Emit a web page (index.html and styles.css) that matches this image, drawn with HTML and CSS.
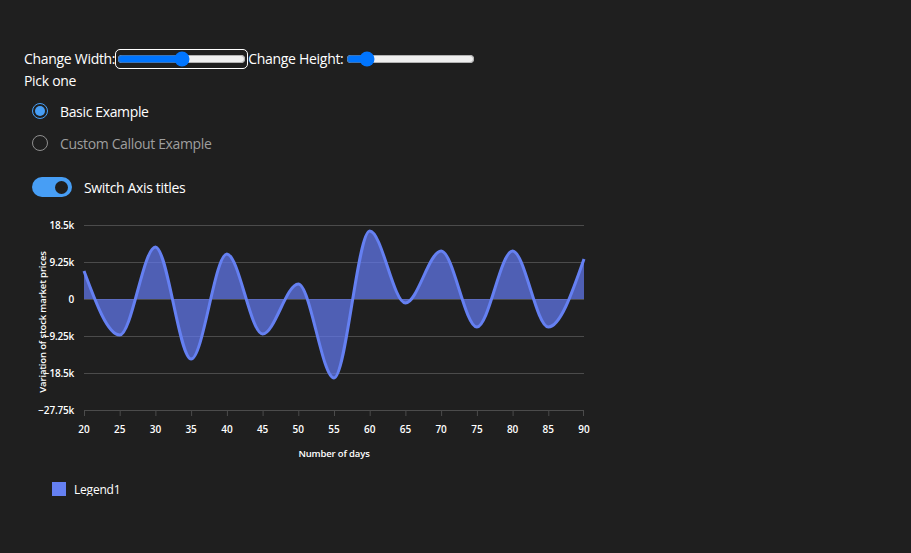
FILE: index.html
```html
<!DOCTYPE html>
<html lang="en">
<head>
<meta charset="utf-8">
<title>Area chart</title>
<link rel="stylesheet" href="styles.css">
</head>
<body>
<div class="page">
  <div class="controls">
    <label class="ctl-label" for="w">Change Width:</label>
    <input id="w" class="slider focused" type="range" min="0" max="100" value="50">
    <label class="ctl-label" for="h">Change Height:</label>
    <input id="h" class="slider" type="range" min="0" max="100" value="12">
  </div>
  <div class="pick">Pick one</div>
  <div class="radios">
    <div class="radio-row">
      <span class="radio checked"><span class="dot"></span></span>
      <span class="radio-label">Basic Example</span>
    </div>
    <div class="radio-row">
      <span class="radio"></span>
      <span class="radio-label muted">Custom Callout Example</span>
    </div>
  </div>
  <div class="switch-row">
    <span class="switch"><span class="knob"></span></span>
    <span class="switch-label">Switch Axis titles</span>
  </div>
  <svg class="chart" width="580" height="255" viewBox="24 210 580 255">
    <g class="grid">
      <line x1="84" y1="225.5" x2="584" y2="225.5"/>
      <line x1="84" y1="262.5" x2="584" y2="262.5"/>
      <line x1="84" y1="299.5" x2="584" y2="299.5"/>
      <line x1="84" y1="336.5" x2="584" y2="336.5"/>
      <line x1="84" y1="373.5" x2="584" y2="373.5"/>
      <line x1="84" y1="410.5" x2="584" y2="410.5"/>
    </g>
    <g class="ticks">
      <line x1="84.5" y1="410" x2="84.5" y2="416"/>
      <line x1="120.2" y1="410" x2="120.2" y2="416"/>
      <line x1="155.9" y1="410" x2="155.9" y2="416"/>
      <line x1="191.6" y1="410" x2="191.6" y2="416"/>
      <line x1="227.4" y1="410" x2="227.4" y2="416"/>
      <line x1="263.1" y1="410" x2="263.1" y2="416"/>
      <line x1="298.8" y1="410" x2="298.8" y2="416"/>
      <line x1="334.5" y1="410" x2="334.5" y2="416"/>
      <line x1="370.2" y1="410" x2="370.2" y2="416"/>
      <line x1="405.9" y1="410" x2="405.9" y2="416"/>
      <line x1="441.6" y1="410" x2="441.6" y2="416"/>
      <line x1="477.4" y1="410" x2="477.4" y2="416"/>
      <line x1="513.1" y1="410" x2="513.1" y2="416"/>
      <line x1="548.8" y1="410" x2="548.8" y2="416"/>
      <line x1="583.5" y1="410" x2="583.5" y2="416"/>
    </g>
    <path class="area" d="M84,271 C95.9,303 107.8,335 119.71,335 C131.62,335 143.52,247 155.43,247 C167.33,247 179.24,359 191.14,359 C203.05,359 214.95,254 226.86,254 C238.76,254 250.67,334 262.57,334 C274.48,334 286.38,284 298.29,284 C310.19,284 322.1,378 334,378 C345.9,378 357.81,231 369.71,231 C381.62,231 393.52,303 405.43,303 C417.33,303 429.24,251 441.14,251 C453.05,251 464.95,327 476.86,327 C488.76,327 500.67,251 512.57,251 C524.48,251 536.38,327 548.29,327 C560.19,327 572.1,293 584,259 L584,299 L84,299 Z"/>
    <path class="line" d="M84,271 C95.9,303 107.8,335 119.71,335 C131.62,335 143.52,247 155.43,247 C167.33,247 179.24,359 191.14,359 C203.05,359 214.95,254 226.86,254 C238.76,254 250.67,334 262.57,334 C274.48,334 286.38,284 298.29,284 C310.19,284 322.1,378 334,378 C345.9,378 357.81,231 369.71,231 C381.62,231 393.52,303 405.43,303 C417.33,303 429.24,251 441.14,251 C453.05,251 464.95,327 476.86,327 C488.76,327 500.67,251 512.57,251 C524.48,251 536.38,327 548.29,327 C560.19,327 572.1,293 584,259"/>
    <g class="ylabels">
      <text x="74" y="229">18.5k</text>
      <text x="74" y="266">9.25k</text>
      <text x="74" y="303">0</text>
      <text x="74" y="340">−9.25k</text>
      <text x="74" y="377">−18.5k</text>
      <text x="74" y="414">−27.75k</text>
    </g>
    <g class="xlabels">
      <text x="84" y="433">20</text>
      <text x="119.7" y="433">25</text>
      <text x="155.4" y="433">30</text>
      <text x="191.1" y="433">35</text>
      <text x="226.9" y="433">40</text>
      <text x="262.6" y="433">45</text>
      <text x="298.3" y="433">50</text>
      <text x="334" y="433">55</text>
      <text x="369.7" y="433">60</text>
      <text x="405.4" y="433">65</text>
      <text x="441.1" y="433">70</text>
      <text x="476.9" y="433">75</text>
      <text x="512.6" y="433">80</text>
      <text x="548.3" y="433">85</text>
      <text x="584" y="433">90</text>
    </g>
    <text class="axis-title" x="334" y="457">Number of days</text>
    <text class="axis-title" transform="translate(46 322) rotate(-90)">Variation of stock market prices</text>
  </svg>
  <div class="legend">
    <span class="swatch"></span>
    <span class="legend-label">Legend1</span>
  </div>
</div>
</body>
</html>
```

FILE: styles.css
```css
html, body {
  margin: 0;
  padding: 0;
  background: #1f1f1f;
}
body {
  font-family: "Segoe UI", "Open Sans", "Noto Sans", sans-serif;
  color: #ffffff;
  font-size: 14px;
}
.page {
  padding: 49px 24px 0 24px;
}
.controls {
  display: flex;
  align-items: center;
  height: 20px;
}
.ctl-label {
  font-size: 14px;
  line-height: 20px;
  letter-spacing: -0.3px;
}
.slider {
  width: 129px;
  height: 16px;
  margin: 0 2px;
  accent-color: #0075ff;
}
.slider.focused {
  outline: 1px solid #ffffff;
  outline-offset: 1px;
  border-radius: 3px;
}
.pick {
  margin-top: 2px;
  line-height: 20px;
  letter-spacing: -0.3px;
}
.radios {
  display: flex;
  flex-direction: column;
  margin-top: 4px;
}
.radio-row {
  display: flex;
  align-items: center;
  height: 32px;
  padding-left: 8px;
}
.radio {
  box-sizing: border-box;
  width: 16px;
  height: 16px;
  border: 1px solid #8f8f8f;
  border-radius: 50%;
  display: flex;
  align-items: center;
  justify-content: center;
}
.radio.checked {
  border-color: #479ef5;
}
.dot {
  width: 10px;
  height: 10px;
  border-radius: 50%;
  background: #479ef5;
}
.radio-label {
  margin-left: 12px;
  letter-spacing: -0.35px;
}
.radio-label.muted {
  color: #9e9e9e;
}
.switch-row {
  display: flex;
  align-items: center;
  margin-top: 18px;
  padding-left: 8px;
  height: 20px;
}
.switch {
  box-sizing: border-box;
  width: 40px;
  height: 20px;
  border-radius: 10px;
  background: #479ef5;
  display: flex;
  align-items: center;
  justify-content: flex-end;
  padding-right: 4px;
}
.knob {
  width: 13px;
  height: 13px;
  border-radius: 50%;
  background: #1f1f1f;
}
.switch-label {
  margin-left: 12px;
  letter-spacing: -0.35px;
}
.chart {
  display: block;
  margin-top: 13px;
  font-family: "Segoe UI", "Open Sans", "Noto Sans", sans-serif;
}
.grid line {
  stroke: #4b4b4b;
  stroke-width: 1;
}
.ticks line {
  stroke: #4b4b4b;
  stroke-width: 1;
}
.area {
  fill: rgba(98, 120, 238, 0.72);
}
.line {
  fill: none;
  stroke: #6580f2;
  stroke-width: 3;
}
.ylabels text {
  fill: #ffffff;
  font-size: 10px;
  font-weight: 600;
  text-anchor: end;
  letter-spacing: -0.2px;
}
.xlabels text {
  fill: #ffffff;
  font-size: 10px;
  font-weight: 600;
  text-anchor: middle;
}
.axis-title {
  fill: #ffffff;
  font-size: 9.5px;
  font-weight: 600;
  text-anchor: middle;
  letter-spacing: -0.15px;
}
.legend {
  display: flex;
  align-items: center;
  margin-top: 17px;
  padding-left: 28px;
  height: 14px;
}
.swatch {
  width: 14px;
  height: 14px;
  background: #6580f2;
}
.legend-label {
  margin-left: 8px;
  font-size: 12px;
  letter-spacing: -0.2px;
}
```
